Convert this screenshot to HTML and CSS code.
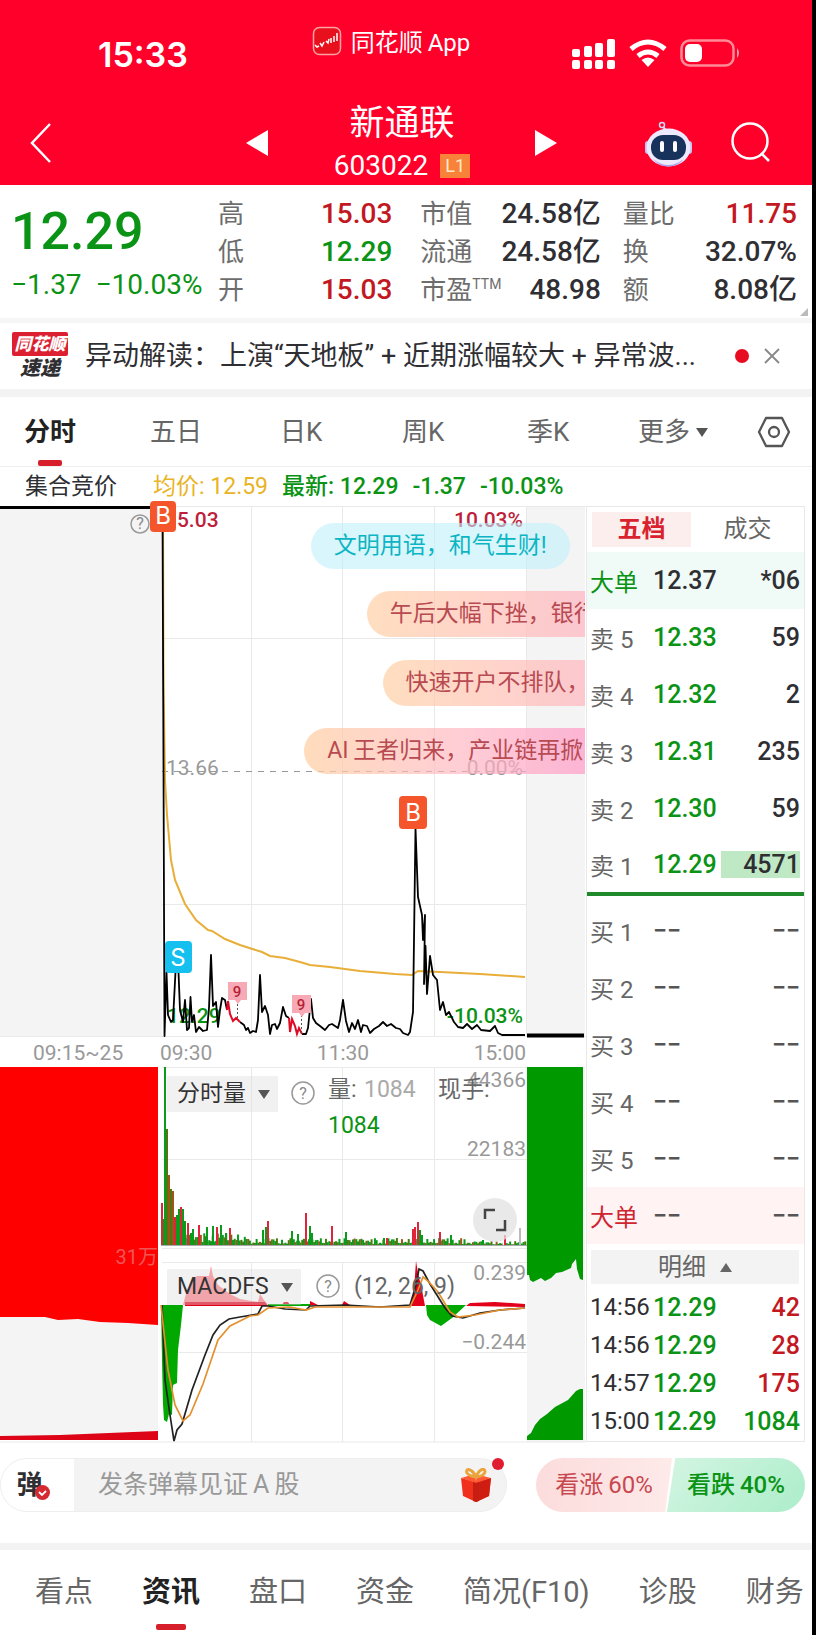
FILE: index.html
```html
<!DOCTYPE html>
<html lang="zh-CN">
<head>
<meta charset="utf-8">
<meta name="viewport" content="width=device-width, initial-scale=1">
<title>新通联 603022</title>
<link rel="stylesheet" href="styles.css">
</head>
<body>
<div class="app">
  <header class="header">
    <div class="status">
      <time class="status-time">15:33</time>
      <div class="status-app">
        <svg width="30" height="30" viewBox="0 0 30 30"><rect x="1.500" y="1.500" width="27" height="27" rx="6" fill="#e8101c" stroke="#ffa0a4" stroke-width="1.500"/><path d="M3 19l2 2 2-1M8 17l2 3 2-4M14 15l2 2 1-4M19 12v5M22 10v6M25 7v8" fill="none" stroke="#fff" stroke-width="1.500"/></svg>
        <span>同花顺&thinsp;App</span>
      </div>
      <div class="status-icons">
        <svg width="44" height="30" viewBox="0 0 44 30" fill="#fff"><rect x="0" y="10" width="8" height="8" rx="2"/><rect x="12" y="7" width="8" height="11" rx="2"/><rect x="23" y="4" width="8" height="14" rx="2"/><rect x="35" y="0" width="8" height="18" rx="2"/><rect x="0" y="21" width="8" height="9" rx="2"/><rect x="12" y="21" width="8" height="9" rx="2"/><rect x="23" y="21" width="8" height="9" rx="2"/><rect x="35" y="21" width="8" height="9" rx="2"/></svg>
        <svg width="38" height="28" viewBox="0 0 38 28" fill="none" stroke="#fff" stroke-width="5"><path d="M2 10Q19-4 36 10"/><path d="M9 17q10-8 20 0"/><path d="M12.500 21q6.500-5 13 0L19 28z" fill="#fff" stroke="none"/></svg>
        <svg width="60" height="28" viewBox="0 0 60 28"><rect x="1.500" y="1.500" width="52" height="25" rx="8" fill="none" stroke="#ff8b96" stroke-width="2.500"/><rect x="5" y="5" width="17" height="18" rx="5" fill="#fff"/><path d="M57 9q4 5 0 10z" fill="#ff9ba5"/></svg>
      </div>
    </div>
    <nav class="nav">
      <button class="icon-btn back" aria-label="返回"><svg width="22" height="40" viewBox="0 0 22 40"><path d="M20 1L2 20l18 19" fill="none" stroke="#fff" stroke-width="2.500"/></svg></button>
      <div class="nav-stock">
        <button class="icon-btn" aria-label="上一只"><svg width="23" height="26" viewBox="0 0 23 26"><path d="M22 0v26L0 13z" fill="#fff"/></svg></button>
        <div class="nav-title">
          <h1>新通联</h1>
          <p>603022 <span class="level">L1</span></p>
        </div>
        <button class="icon-btn" aria-label="下一只"><svg width="23" height="26" viewBox="0 0 23 26"><path d="M0 0v26l22-13z" fill="#fff"/></svg></button>
      </div>
      <div class="nav-tools">
        <button class="icon-btn" aria-label="智能助手"><svg width="47" height="46" viewBox="0 0 47 46"><circle cx="17" cy="4" r="2.500" fill="none" stroke="#d8d9fa" stroke-width="1.500"/><path d="M18 6l4 4" stroke="#d8d9fa" stroke-width="2"/><rect x="0" y="20" width="6" height="13" rx="3" fill="#c5c3f6"/><rect x="41" y="20" width="6" height="13" rx="3" fill="#c5c3f6"/><ellipse cx="23.500" cy="26.500" rx="22" ry="19" fill="#edeaff"/><path d="M8 38q15 12 31 0-6 7.500-16 7.500-9 0-15-7.500z" fill="#a9a3ee"/><rect x="6" y="14" width="35" height="25" rx="12" fill="#17335c"/><rect x="15" y="20" width="4" height="11" rx="2" fill="#fff"/><rect x="28" y="20" width="4" height="11" rx="2" fill="#fff"/></svg></button>
        <button class="icon-btn" aria-label="搜索"><svg width="40" height="42" viewBox="0 0 40 42" fill="none" stroke="#fff" stroke-width="2.500"><circle cx="19" cy="20" r="17.500"/><path d="M30 32l8 8"/></svg></button>
      </div>
    </nav>
  </header>

  <section class="quote">
    <div class="quote-main">
      <strong class="price">12.29</strong>
      <p class="change"><span>−1.37</span><span>−10.03%</span></p>
    </div>
    <dl class="stats"><dt>高</dt><dd class="up">15.03</dd><dt>低</dt><dd class="down">12.29</dd><dt>开</dt><dd class="up">15.03</dd></dl>
    <dl class="stats"><dt>市值</dt><dd>24.58亿</dd><dt>流通</dt><dd>24.58亿</dd><dt>市盈<sup>TTM</sup></dt><dd>48.98</dd></dl>
    <dl class="stats"><dt>量比</dt><dd class="up">11.75</dd><dt>换</dt><dd>32.07%</dd><dt>额</dt><dd>8.08亿</dd></dl>
    <i class="corner"></i>
  </section>

  <section class="news">
    <div class="news-logo"><b>同花顺</b><em>速递</em></div>
    <a class="news-link" href="#news">异动解读：上演“天地板” + 近期涨幅较大 + 异常波...</a>
    <i class="dot"></i>
    <button class="icon-btn" aria-label="关闭"><svg width="16" height="16" viewBox="0 0 16 16"><path d="M1 1l14 14M15 1L1 15" stroke="#888" stroke-width="1.800"/></svg></button>
  </section>

  <nav class="periods">
    <a class="active" href="#fs">分时</a><a href="#5d">五日</a><a href="#dk">日K</a><a href="#wk">周K</a><a href="#qk">季K</a><a href="#more">更多<i class="caret"></i></a>
    <button class="icon-btn" aria-label="设置"><svg width="34" height="32" viewBox="0 0 34 32" fill="none" stroke="#555" stroke-width="2.300"><path d="M9 2h16l7 14-7 14H9L2 16z" stroke-linejoin="round"/><circle cx="17" cy="16" r="5"/></svg></button>
  </nav>

  <p class="info"><span class="auction">集合竞价</span><span class="avg">均价: 12.59</span><span class="down">最新: 12.29</span><span class="down">-1.37</span><span class="down">-10.03%</span></p>

  <main class="board">
    <div class="chart">
      <svg class="plot" viewBox="0 506 586 936">
        <g fill="#f4f4f4"><path d="M0 507h162v529H0zM0 1067h158v373H0zM527 507h58v529h-58zM527 1067h58v375h-58z"/></g>
        <g stroke="#e9e9e9" fill="none"><path d="M162 506.500h424M162 638.500h365M162 904.500h365M0 1036.500h586M162 1067.500h365M162 1159.500h365M162 1248.500h365M162 1262.500h365M162 1352.500h365M0 1442h586M251.500 507v529M342.500 507v529M434.500 507v529M526.500 507v529M251.500 1067v181M342.500 1067v181M434.500 1067v181M251.500 1262v180M342.500 1262v180M434.500 1262v180"/></g>
        <path d="M162 771.500h364" stroke="#999" stroke-dasharray="6 6"/>
        <g fill="#f00"><path d="M0 1067h158v258l-30-2-28-1-22-3-20 1-13-3H0z"/><path d="M0 1436l60-1 98-4v9H0z" fill="#dc0416"/></g>
        <g fill="#009900"><path d="M527 1067h56v213l-3-1-3-10-1-10-4 5-1 4-9 4-6 1-5 5-6 3-4-3-4 2-4 2-3-2-1-5h-2z"/><path d="M527 1440v-4l4-3 4-8 5-6 7-5 8-7 13-7 8-9 4-2h3v51z"/></g>
        <path d="M0 507.500h162" stroke="#000" stroke-width="3"/>
        <path d="M163 520L163.500 680 165 780 167 815 171 860 175 880 185 904 196 920 208 930 212 931 225 939 240 945 262 952 270 956 285 958 300 962 310 965 330 967 360 971 395 974 412 975 418 971 440 972 480 974 525 977" fill="none" stroke="#e9ae38" stroke-width="2"/>
        <g class="tag-text limit"><text x="167" y="1023" fill="#0a9314">12.29</text><text x="523" y="1023" fill="#0a9314" text-anchor="end">-10.03%</text></g>
        <path d="M162.500 507L164.500 1036 166.500 972 168 1015 171 1022 173 1020 175.500 972 178.500 972 180 1010 183 1022 185 1000 187 1030 189 1028 190.500 997 192 1022 194 1015 196 1032 199 1027 203 1031 207 1030 209 1008 211 955 213 1006 216 1002 218 1027 220 1010 222 998 225 1000 227 1010M240 1022l4 3 2 5 2-2 2 5 3-2 3 1 2-12 2-45 2 37 3-6 3 9 2 19 2-9 3-1 2 5 3-6 3-16 3 9 3 2M302 1034h4l2-6 3-29 2 19 3 5 4 3 5 4 4-5 3-1 6 4 2-8 3-20 3 21 3 11 3-9 3 6 3-9 3 12 2-7 4 1 3 7 4-4 5-3 4-4 4 4 4-2 5 4 4 1 3 4 5 2 2-3 3-20 1-72L415.500 828 418 897 422 915 423 940 425 915 424 984 425.500 946 427 994 430 956 433 975 437 980 440 1010 443 1002 446 1015 449 1012 454 1022 458 1027 463 1028 467 1024 472 1029 477 1025 481 1030 490 1031 495 1026 498 1033 502 1035 525 1035" fill="none" stroke="#000" stroke-width="1.800" stroke-linejoin="round"/>
        <path d="M227 1010l1-9 2 13 3 7 3-3 4 4M289 1018l1 14 2-13 3 7 2 8 2-6 3 6" fill="none" stroke="#e00b25" stroke-width="2"/>
        <path d="M527 1035.500h57" stroke="#000" stroke-width="4"/>
        <g stroke="#555" stroke-dasharray="2 2"><path d="M237.500 1000v20M301.500 1015v18"/></g>
        <g fill="#f7a9b5"><path d="M228 982h19v18h-6l-3 4-3-4h-7zM292 995h19v18h-6l-3 4-3-4h-7z"/></g>
        <g class="nine"><text x="237" y="997">9</text><text x="301" y="1010">9</text></g>
        <g fill="#999" class="tag-text"><text x="166" y="775">13.66</text><text x="523" y="775" text-anchor="end">0.00%</text><text x="33" y="1060">09:15~25</text><text x="160" y="1060">09:30</text><text x="343" y="1060" text-anchor="middle">11:30</text><text x="526" y="1060" text-anchor="end">15:00</text><text x="526" y="1087" text-anchor="end">44366</text><text x="526" y="1156" text-anchor="end">22183</text><text x="526" y="1280" text-anchor="end">0.239</text><text x="526" y="1349" text-anchor="end">−0.244</text></g>
        <text x="158" y="1264" text-anchor="end" class="faint">31万</text>
        <g class="tag-text limit" fill="#bd1f3c"><text x="165" y="527">15.03</text><text x="523" y="527" text-anchor="end">10.03%</text></g>
        <g class="mark"><rect x="150" y="501" width="26" height="31" rx="4" fill="#f4552b"/><text x="163" y="524">B</text><rect x="399" y="796" width="28" height="33" rx="4" fill="#f4552b"/><text x="413" y="821">B</text><rect x="165" y="941" width="27" height="32" rx="4" fill="#15bfee"/><text x="178" y="966">S</text></g>
        <g fill="none" stroke="#999" stroke-width="1.500"><circle cx="140" cy="524" r="9"/><circle cx="303" cy="1093" r="11"/><circle cx="328" cy="1286" r="11"/></g>
        <g class="help"><text x="140" y="529">?</text><text x="303" y="1099">?</text><text x="328" y="1292">?</text></g>
        <g id="volume"></g>
        <path d="M161 1245.500h366" stroke="#aaa"/>
        <path d="M161 1305h22l-2 20-3 25-1 33-4 2-1 30-3-1-2 8-3-2-1-16-1-44z" fill="#00a800"/>
        <path d="M183 1305l4-15 5-11 5-3h12l2-10 2 10 5 9 12 9 10 5 18 3 2-8 4 6 4 5z" fill="#ff808a"/>
        <path d="M185 1302h80l3 4h-83zM282 1305l2-3h4l2 3zM310 1305v-4l8 4zM342 1305l2-4 6 4zM411 1306l3-16 2-29 2 12 4 17 3 16zM466 1306l4-3 25-1 30 2v3z" fill="#e3001b"/>
        <path d="M268 1304h42v2h-42zM426 1305h40l-14 13-11 8-11-6-3-5z" fill="#00a800"/>
        <path d="M162 1305L165 1380 170 1415 174 1441 177 1430 182 1424 192 1390 205 1355 213 1335 220 1325 229 1319 240 1317 258 1314 262 1306 268 1306 285 1309 306 1310 310 1306 345 1305 380 1307 410 1305 416 1285 419 1269 423 1271 430 1284 445 1308 452 1316 463 1318 480 1313 500 1310 525 1308" fill="none" stroke="#222" stroke-width="1.700"/>
        <path d="M161 1305L168 1370 175 1405 183 1421 190 1415 203 1384 218 1340 230 1326 250 1316 258 1315 268 1308 290 1307 306 1310 315 1307 410 1307 418 1290 423 1277 428 1281 438 1292 450 1312 458 1317 475 1315 500 1310 525 1308" fill="none" stroke="#e4902f" stroke-width="1.700"/>
        <g class="reading"><text x="328" y="1097">量:</text><text x="364" y="1097" fill="#aaa">1084</text><text x="438" y="1097">现手:</text><text x="328" y="1133" fill="#0a9314">1084</text><text x="354" y="1294">(12, 26, 9)</text></g>
      </svg>
      <ul class="danmaku">
        <li class="bubble calm">文明用语，和气生财!</li>
        <li class="bubble second">午后大幅下挫，银行</li>
        <li class="bubble third">快速开户不排队，</li>
        <li class="bubble fourth">AI&thinsp;王者归来，产业链再掀</li>
      </ul>
      <label class="picker picker-volume"><select aria-label="副图一指标"><option>分时量</option></select><i class="caret"></i></label>
      <label class="picker picker-macd"><select aria-label="副图二指标"><option>MACDFS</option></select><i class="caret"></i></label>
      <button class="expand" aria-label="全屏"><svg width="24" height="24" viewBox="0 0 24 24" fill="none" stroke="#444" stroke-width="2.500"><path d="M2 11V2h10M13 22h9V12"/></svg></button>
    </div>

    <aside class="book">
      <div class="book-tabs"><button class="active">五档</button><button>成交</button></div>
      <table class="levels asks">
        <tr class="big-ask"><th>大单</th><td>12.37</td><td>*06</td></tr>
        <tr><th>卖 5</th><td>12.33</td><td>59</td></tr>
        <tr><th>卖 4</th><td>12.32</td><td>2</td></tr>
        <tr><th>卖 3</th><td>12.31</td><td>235</td></tr>
        <tr><th>卖 2</th><td>12.30</td><td>59</td></tr>
        <tr><th>卖 1</th><td>12.29</td><td><mark>4571</mark></td></tr>
      </table>
      <table class="levels bids">
        <tr><th>买 1</th><td>−−</td><td>−−</td></tr>
        <tr><th>买 2</th><td>−−</td><td>−−</td></tr>
        <tr><th>买 3</th><td>−−</td><td>−−</td></tr>
        <tr><th>买 4</th><td>−−</td><td>−−</td></tr>
        <tr><th>买 5</th><td>−−</td><td>−−</td></tr>
        <tr class="big-bid"><th>大单</th><td>−−</td><td>−−</td></tr>
      </table>
      <button class="detail">明细<i class="caret caret-up"></i></button>
      <table class="ticks">
        <tr><td>14:56</td><td class="down">12.29</td><td class="up">42</td></tr>
        <tr><td>14:56</td><td class="down">12.29</td><td class="up">28</td></tr>
        <tr><td>14:57</td><td class="down">12.29</td><td class="up">175</td></tr>
        <tr><td>15:00</td><td class="down">12.29</td><td class="down">1084</td></tr>
      </table>
    </aside>
  </main>

  <section class="talk">
    <div class="talk-box">
      <button class="talk-toggle" aria-label="弹幕开关">弹<svg class="talk-check" width="15" height="15" viewBox="0 0 15 15"><circle cx="7.500" cy="7.500" r="7.500" fill="#d42a32"/><path d="M4 7l3 3 4-4" fill="none" stroke="#fff" stroke-width="1.800"/></svg></button>
      <input class="talk-input" type="text" aria-label="弹幕" placeholder="发条弹幕见证&thinsp;A&thinsp;股">
      <button class="icon-btn gift" aria-label="礼物"><svg width="32" height="34" viewBox="0 0 32 34"><path d="M1 10l15 4 15-4-2 18-13 6-13-6z" fill="#f0301c"/><path d="M16 14l15-4-2 18-13 6z" fill="#cf1d12"/><path d="M1 10l14-4 16 4-15 5z" fill="#ff5a35"/><path d="M13 14l3 1 3-1v19l-3 1-3-1z" fill="#c61e12"/><path d="M16 9C12 0 5 0 7 5q2 3 9 4 8-1 9-5c0-5-6-3-9 5z" fill="none" stroke="#e9a53b" stroke-width="3"/></svg></button>
      <i class="talk-dot"></i>
    </div>
    <div class="vote"><button class="vote-up">看涨&thinsp;60%</button><button class="vote-down">看跌&thinsp;40%</button></div>
  </section>

  <nav class="sections">
    <a href="#kd">看点</a><a class="active" href="#zx">资讯</a><a href="#pk">盘口</a><a href="#zj">资金</a><a href="#jk">简况(F10)</a><a href="#zg">诊股</a><a href="#cw">财务</a>
  </nav>
</div>
<script src="script.js"></script>
</body>
</html>
```

FILE: styles.css
```css
* { box-sizing: border-box; margin: 0; padding: 0; }
body {
  background: #000;
  color: #2f2f33;
  font-family: Roboto, "Noto Sans CJK SC", sans-serif;
}
button, input, select { font: inherit; color: inherit; border: 0; background: none; }
a { color: inherit; text-decoration: none; }
i, em { font-style: normal; }
svg { display: block; }
.app { margin-right: 4px; background: #fff; overflow: hidden; }
.icon-btn { display: block; flex: none; }
.up { color: #c2181f; }
.down { color: #0a9314; }
.caret {
  display: inline-block;
  border: 6px solid transparent;
  border-top: 9px solid #555;
  border-bottom: 0;
}
.caret-up { border-top: 0; border-bottom: 9px solid #666; }

.header { background: #ff002b; color: #fff; height: 185px; }
.status { display: grid; grid-template-columns: 38.4% 32% 1fr; height: 97px; padding-top: 26px; }
.status-time { padding: 11px 0 0 98px; font: 600 34px/36px Inter, sans-serif; }
.status-app { display: flex; gap: 9px; font-size: 24px; line-height: 34px; }
.status-icons { display: flex; gap: 13px; padding-top: 13px; }
.nav { display: grid; grid-template-columns: 30.3% 49.1% 1fr; height: 88px; }
.back { margin: 26px 0 0 30px; justify-self: start; align-self: start; }
.nav-stock { display: flex; justify-content: space-between; width: 312px; }
.nav-stock .icon-btn { align-self: flex-start; margin-top: 33px; }
.nav-title { text-align: center; }
.nav-title h1 { font-size: 35px; line-height: 54px; font-weight: 400; }
.nav-title p { display: flex; align-items: center; gap: 12px; font-size: 28px; line-height: 30px; }
.level { width: 30px; background: #f8823a; font-size: 18px; line-height: 24px; color: #ffe9c8; }
.nav-tools { display: flex; align-items: flex-start; gap: 39px; padding-top: 24px; }

.quote {
  position: relative;
  display: grid;
  grid-template-columns: 190px repeat(3, minmax(0, 1fr));
  column-gap: 28px;
  padding: 10px 15px 9px 0;
  border-bottom: 5px solid #f6f6f6;
}
.quote-main { margin-right: -28px; padding-left: 11px; color: #0a9314; }
.price { display: block; padding-top: 8px; font-size: 52px; line-height: 58px; font-weight: 500; }
.change { display: flex; gap: 14px; font-size: 28px; line-height: 48px; white-space: nowrap; }
.stats { display: grid; grid-template-columns: auto 1fr; line-height: 38px; }
.stats dt { font-size: 26px; color: #6d6d6d; white-space: nowrap; }
.stats dd { font-size: 28px; font-weight: 500; text-align: right; white-space: nowrap; }
.stats sup { font-size: 14px; line-height: 14px; }
.corner { position: absolute; right: 4px; bottom: 2px; border: 4px solid transparent; border-right-color: #bbb; border-bottom-color: #bbb; }

.news { display: flex; align-items: center; height: 66px; padding: 0 32px 0 12px; }
.news-logo { width: 56px; margin-right: 17px; text-align: center; }
.news-logo b { display: block; background: #dc1f31; color: #fff; font-size: 17px; line-height: 24px; font-style: italic; font-weight: 900; border-radius: 2px; }
.news-logo em { display: block; font-size: 20px; line-height: 24px; font-weight: 900; font-style: italic; }
.news-link { flex: 1; font-size: 27px; line-height: 40px; white-space: nowrap; }
.dot { width: 14px; height: 14px; border-radius: 50%; background: #e80c22; margin: 0 15px; }

.periods {
  display: grid;
  grid-template-columns: 126fr 130fr 122fr 125fr 111fr 119fr 55fr;
  align-items: center;
  height: 78px;
  padding-left: 24px;
  border-top: 8px solid #f3f3f3;
  border-bottom: 1px solid #eee;
  color: #666;
  font-size: 26px;
}
.periods a { justify-self: start; line-height: 68px; }
.periods .caret { margin-left: 6px; vertical-align: 4px; }
.active { position: relative; color: #222; font-weight: 700; }
.periods .active::after, .sections .active::after {
  content: "";
  position: absolute;
  left: 50%;
  bottom: 0;
  width: 24px;
  height: 6px;
  margin-left: -12px;
  border-radius: 2px;
  background: #d71f2b;
}
.info { display: flex; height: 39px; padding-left: 25px; font-size: 23px; line-height: 39px; gap: 14px; white-space: nowrap; }
.auction { margin-right: 22px; }
.avg { color: #e9b425; }
.info .down { font-weight: 500; }

.board { display: grid; grid-template-columns: minmax(0, 1fr) 219px; padding-right: 7px; }
.chart { position: relative; }
.plot { width: 100%; height: auto; overflow: visible; }
.tag-text { font-size: 21px; }
.limit { font-weight: 500; }
.nine { font-size: 15px; font-weight: 500; fill: #b51f35; text-anchor: middle; }
.mark text { font: 24px Inter, sans-serif; fill: #fff; text-anchor: middle; }
.help { font-size: 16px; fill: #888; text-anchor: middle; }
.faint { font-size: 20px; fill: #e55; }
.reading { font-size: 23px; fill: #666; }
.danmaku { position: absolute; inset: 0 1px 0 0; overflow: hidden; list-style: none; pointer-events: none; }
.bubble {
  position: absolute;
  padding: 0 23px;
  border-radius: 23px;
  background: linear-gradient(90deg, rgba(255, 208, 165, .7), rgba(255, 180, 200, .75));
  color: #b84a52;
  font-size: 23px;
  line-height: 46px;
  white-space: nowrap;
}
.calm { left: 53.100%; top: 1.800%; background: rgba(190, 240, 250, .6); color: #0bb5c4; }
.second { left: 62.700%; top: 9.100%; }
.third { left: 65.400%; top: 16.400%; padding-right: 40px; }
.fourth { left: 52%; top: 23.700%; background: linear-gradient(90deg, rgba(255, 208, 165, .75), rgba(255, 180, 190, .65) 50%, rgba(255, 160, 205, .8)); }
.picker { position: absolute; left: 28.500%; background: rgba(220, 220, 220, .4); }
.picker select { display: block; appearance: none; padding: 0 32px 0 10px; font-size: 23px; line-height: 36px; height: 36px; color: #333; }
.picker .caret { position: absolute; right: 8px; top: 14px; pointer-events: none; }
.picker-volume { top: 60.900%; }
.picker-macd { top: 81.500%; }
.expand { position: absolute; left: 80.700%; top: 73.900%; display: grid; place-items: center; width: 44px; height: 44px; border-radius: 50%; background: rgba(225, 225, 225, .75); }

.book { border: 1px solid #e8e8e8; padding-top: 5px; }
.book-tabs { display: grid; grid-template-columns: 99px 1fr; padding-left: 5px; height: 35px; margin-bottom: 5px; font-size: 24px; line-height: 35px; color: #666; }
.book-tabs .active { background: #fdeeee; color: #d9222d; }
table { width: 100%; border-collapse: collapse; table-layout: fixed; }
.levels tr { height: 57px; font-size: 25px; }
.levels th { width: 66px; padding-left: 3px; text-align: left; font-size: 24px; font-weight: 400; color: #666; white-space: nowrap; }
.levels td, .ticks td { font-weight: 500; }
.levels td:nth-child(2) { width: 68px; }
.levels td:last-child, .ticks td:last-child { text-align: right; padding-right: 4px; }
.asks td:nth-child(2) { color: #0a9314; }
.asks .big-ask { background: #f0faf6; }
.asks .big-ask td { color: #2f2f33; }
.levels .big-bid { background: #fff3f3; }
.levels .big-bid th { color: #cf2530; }
.levels .big-ask th { color: #0a9314; }
.asks { border-bottom: 4px solid #1f8a2c; margin-bottom: 6px; }
.bids td { color: #555; }
.levels mark { display: block; background: #bfe8c5; color: inherit; line-height: 27px; text-align: right; }
.detail { display: flex; width: calc(100% - 9px); margin: 6px 5px 4px 4px; justify-content: center; align-items: center; gap: 14px; background: #f3f3f3; color: #666; font-size: 24px; line-height: 34px; }
.ticks tr { height: 38px; font-size: 25px; }
.ticks td { white-space: nowrap; }
.ticks td:first-child { width: 66px; padding-left: 3px; font-size: 24px; font-weight: 400; }
.ticks td:nth-child(2) { width: 68px; }

.talk { display: flex; justify-content: space-between; padding: 16px 7px 31px 0; border-bottom: 7px solid #f3f3f3; }
.talk-box { position: relative; display: flex; align-items: center; width: 507px; height: 54px; border: 1px solid #eee; border-radius: 27px; background: #f3f3f3; }
.talk-toggle { position: relative; width: 73px; height: 52px; padding-right: 16px; border-radius: 26px 0 0 26px; background: #fff; font-size: 26px; font-weight: 700; line-height: 52px; }
.talk-check { position: absolute; left: 34px; bottom: 11px; }
.talk-input { flex: 1; min-width: 0; padding-left: 24px; font-size: 25px; line-height: 52px; }
.talk-input::placeholder { color: #999; opacity: 1; }
.gift { margin-right: 14px; }
.talk-dot { position: absolute; right: 2px; top: -1px; width: 12px; height: 12px; border-radius: 50%; background: #df1c30; }
.vote { display: flex; width: 269px; height: 54px; font-size: 24px; line-height: 54px; }
.vote button { white-space: nowrap; }
.vote-up { width: 136px; border-radius: 27px 0 0 27px; background: linear-gradient(90deg, #fcdcdc, #fdeae9); color: #c94850; clip-path: polygon(0 0, 100% 0, 95% 100%, 0 100%); }
.vote-down { flex: 1; margin-left: -5px; border-radius: 0 27px 27px 0; background: linear-gradient(135deg, #d3f5e2, #acedca); color: #0a9314; font-weight: 500; clip-path: polygon(6% 0, 100% 0, 100% 100%, 0 100%); }

.sections { display: flex; gap: 49px; padding-left: 35px; overflow: hidden; font-size: 29px; line-height: 85px; height: 85px; color: #666; white-space: nowrap; }
.sections .active { height: 80px; }
.sections .active::after { width: 30px; margin-left: -15px; }
```

FILE: script.js
```js
// One bar per minute in the volume panel, drawn upwards from the baseline.
const NS = "http://www.w3.org/2000/svg";
const BASE = 1245;
const STEP = 1.690;
const LEFT = 161;
// Minutes that traded well above the usual volume, as [x, height].
const peaks = [
  [161, 42], [164, 178], [166, 116], [168, 70], [170, 56], [172, 54], [174, 28], [176, 30],
  [178, 36], [180, 38], [182, 36], [184, 24], [187, 22], [190, 12], [192, 16], [198, 20],
  [206, 18], [212, 19], [216, 18], [220, 20], [225, 12], [229, 17], [262, 15], [265, 18],
  [267, 24], [291, 14], [297, 11], [305, 32], [309, 19], [311, 12], [331, 19], [345, 13],
  [383, 7], [386, 7], [412, 16], [414, 18], [417, 23], [419, 15], [421, 10], [439, 13],
  [450, 10], [482, 5], [504, 10], [519, 17]
];
const layer = document.getElementById("volume");
const colours = ["#0a9a1c", "#4c7a10", "#e0243a", "#a0561b"];
function bar(x, height, fill) {
  const rect = document.createElementNS(NS, "rect");
  rect.setAttribute("x", x);
  rect.setAttribute("y", BASE - height);
  rect.setAttribute("width", 2);
  rect.setAttribute("height", height);
  rect.setAttribute("fill", fill);
  layer.appendChild(rect);
}
for (let i = 0; i < 216; i++) {
  const noise = (i * i * 37 % 101) / 101;
  const height = i < 12 ? 26 : i < 50 ? 3 + noise * 9 : i < 180 ? 1 + noise * 6 : noise * 4;
  bar(LEFT + i * STEP, height, colours[(i * i + 3 * i) % 7 % 4]);
}
peaks.forEach(([x, height], i) => {
  const fill = x > 515 ? "#bbb" : x > 410 && x < 416 ? "#e0243a" : i > 1 && i < 6 ? colours[1 + (i % 2) * 2] : colours[i % 3 ? 0 : 2];
  bar(x, height, x === 164 ? "#0a9a1c" : fill);
});
```
